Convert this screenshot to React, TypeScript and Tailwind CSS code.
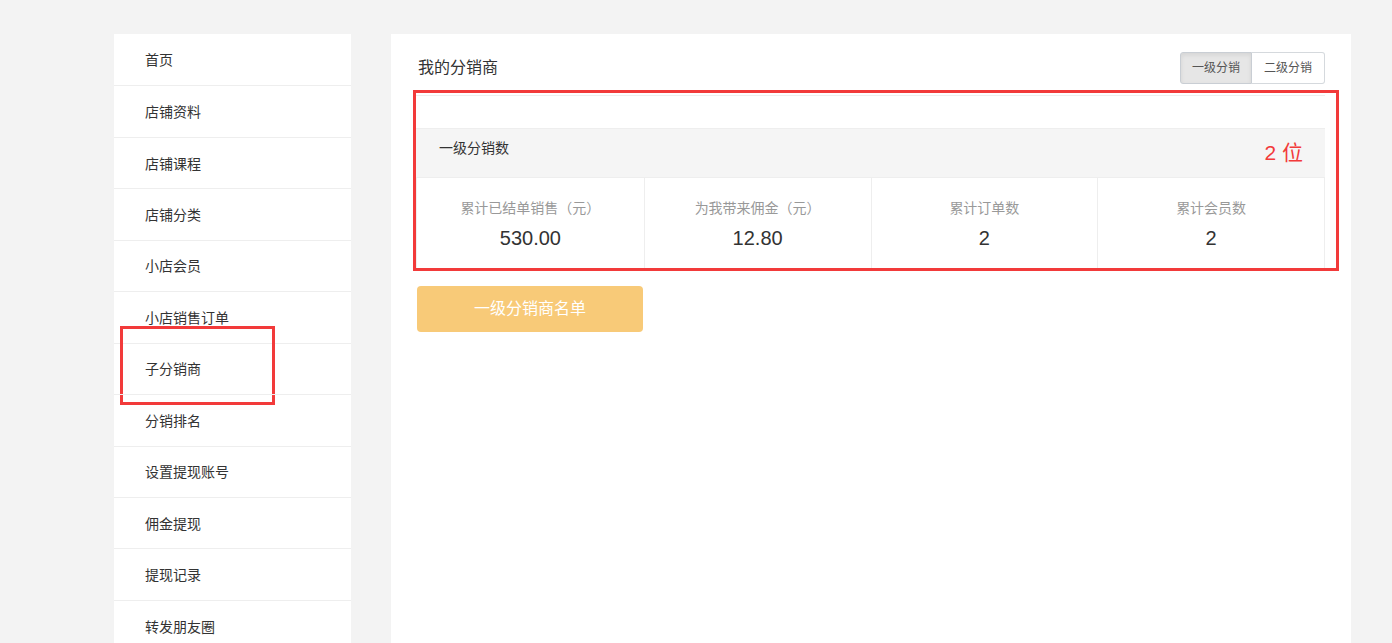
const menu = [
  '首页',
  '店铺资料',
  '店铺课程',
  '店铺分类',
  '小店会员',
  '小店销售订单',
  '子分销商',
  '分销排名',
  '设置提现账号',
  '佣金提现',
  '提现记录',
  '转发朋友圈',
];

const stats = [
  { label: '累计已结单销售（元）', value: '530.00' },
  { label: '为我带来佣金（元）', value: '12.80' },
  { label: '累计订单数', value: '2' },
  { label: '累计会员数', value: '2' },
];

export default function App() {
  return (
    <div
      className="h-[643px] overflow-hidden bg-[#f3f3f3] flex items-start gap-[40px] pl-[114px] pt-[34px]"
      style={{ fontFamily: '"Liberation Sans", "Noto Sans CJK SC", sans-serif' }}
    >
      {/* side menu */}
      <div className="w-[237px] bg-white shrink-0">
        {menu.map((item, i) => (
          <div
            key={item}
            className={`relative h-[51.45px] flex items-center pl-[31px] pt-[2px] text-[14px] text-[#333] ${i > 0 ? 'border-t border-[#eeeeee]' : ''}`}
          >
            {item}
            {item === '子分销商' && (
              <div className="absolute left-[6px] top-[-18px] w-[155px] h-[79px] border-[3px] border-[#f23a3a]" />
            )}
          </div>
        ))}
      </div>

      {/* main panel */}
      <div className="w-[960px] h-[620px] bg-white shrink-0 pl-[25px] pr-[26px] pt-[18px]">
        <div className="flex items-center justify-between h-[31px]">
          <h2 className="pl-[2px] text-[16px] text-[#333]">我的分销商</h2>
          <div className="flex text-[12px] text-[#555]">
            <button className="h-[32px] w-[72px] bg-[#e6e6e6] border border-[#c9ced4] rounded-l-[3px] shadow-[inset_0_2px_4px_rgba(0,0,0,0.08)]">
              一级分销
            </button>
            <button className="h-[32px] w-[73px] bg-white border border-l-0 border-[#d5d9dd] rounded-r-[3px]">
              二级分销
            </button>
          </div>
        </div>

        <div className="relative mt-[12px] border-t border-[#eeeeee]">
          <div className="h-[32px]" />
          <div className="h-[49px] bg-[#f5f5f5] border-t border-[#eeeeee] flex justify-between items-start pl-[23px] pr-[22px]">
            <span className="pt-[9px] text-[14px] leading-[20px] text-[#333]">一级分销数</span>
            <span className="pt-[10px] text-[21px] leading-[28px] text-[#f23a3a]">2 位</span>
          </div>
          <div className="grid grid-cols-4 border border-t border-[#eeeeee]">
            {stats.map((s, i) => (
              <div
                key={s.label}
                className={`h-[90px] flex flex-col items-center pt-[20px] ${i > 0 ? 'border-l border-[#eeeeee]' : ''}`}
              >
                <span className="text-[14px] leading-[20px] text-[#999]">{s.label}</span>
                <span className="mt-[6px] text-[20px] leading-[28px] text-[#333]">{s.value}</span>
              </div>
            ))}
          </div>
          <div className="absolute left-[-3px] top-[-6px] right-[-14px] bottom-[-2px] border-[3px] border-[#f23a3a]" />
        </div>

        <button className="mt-[17px] ml-[1px] w-[226px] h-[46px] rounded-[4px] bg-[#f8ca78] text-white text-[16px]">
          一级分销商名单
        </button>
      </div>
    </div>
  );
}
